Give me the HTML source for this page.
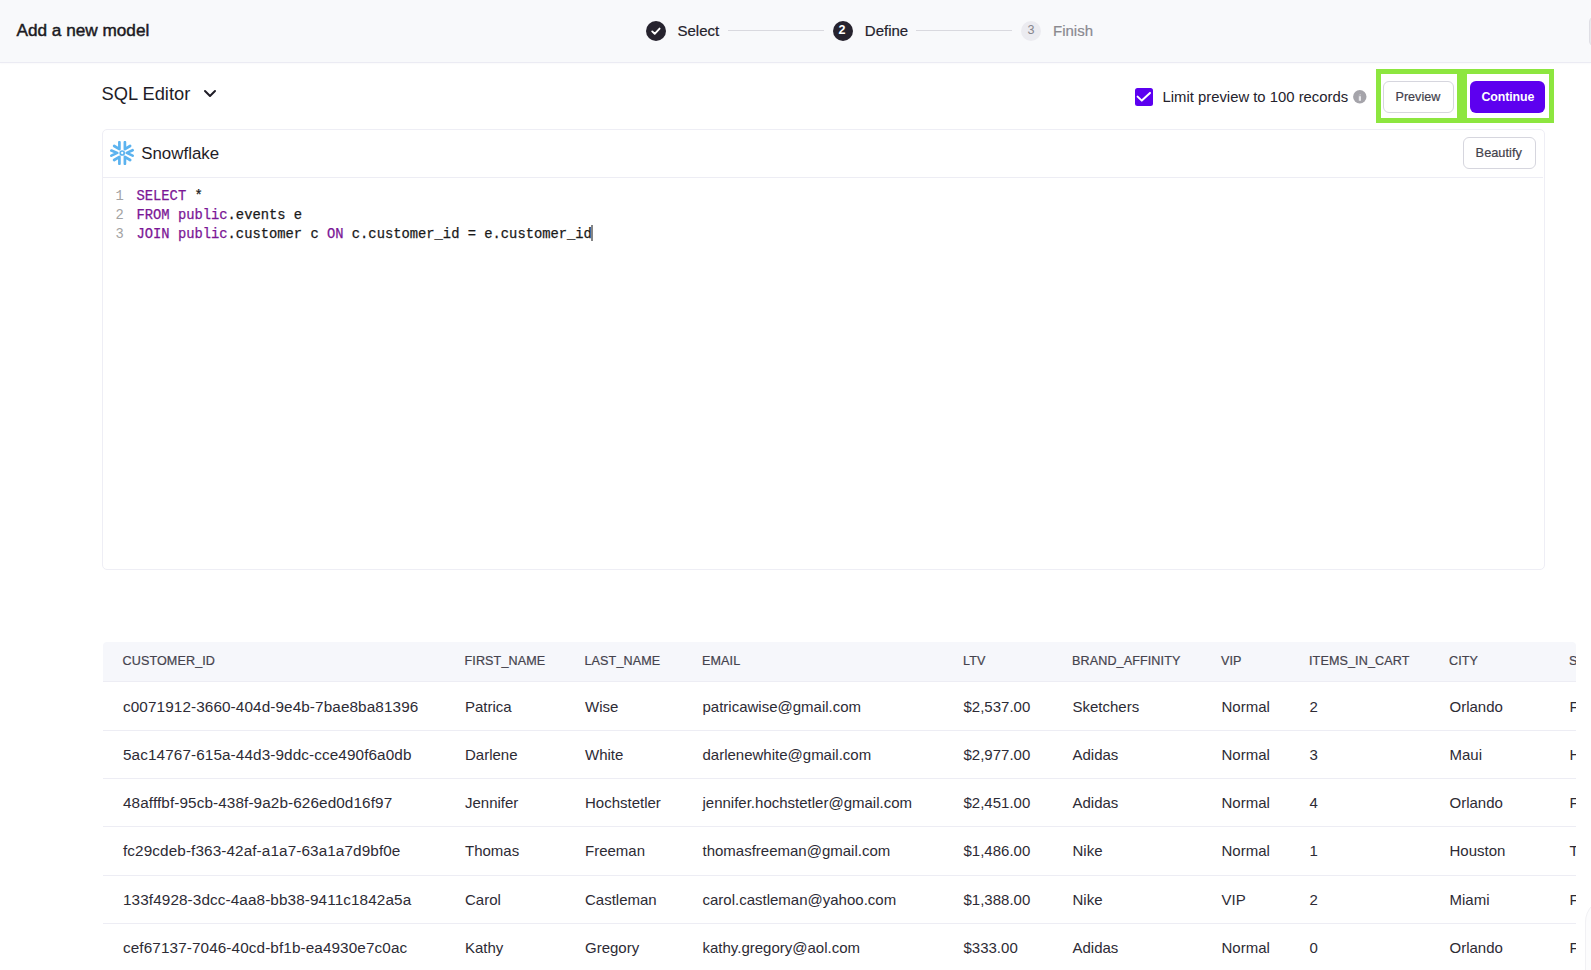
<!DOCTYPE html>
<html><head><meta charset="utf-8"><title>Add a new model</title>
<style>
html,body{margin:0;padding:0;}
body{width:1591px;height:970px;overflow:hidden;position:relative;background:#fff;font-family:'Liberation Sans', sans-serif;}
.t{position:absolute;white-space:nowrap;}
</style></head><body>
<div style="position:absolute;left:0;top:0;width:1591px;height:62px;background:#f8f9fb;border-bottom:1px solid #ebebf3;box-shadow:0 1px 1.5px rgba(30,30,80,0.025)"></div>
<div class="t" style="left:16.5px;top:15px;font-size:17.2px;line-height:30px;color:#1b1a22;font-weight:normal;letter-spacing:0px;font-family:'Liberation Sans', sans-serif;-webkit-text-stroke:0.45px currentColor;">Add a new model</div>
<div style="position:absolute;left:1589px;top:16px;width:30px;height:29px;border:1px solid #dfdfe5;border-radius:6px;background:#eaeaee"></div>
<div style="position:absolute;left:646px;top:21px;width:20px;height:20px;border-radius:50%;background:#26232e"><svg width="20" height="20" viewBox="0 0 20 20" style="position:absolute;left:0;top:0"><path d="M6.2 10.4 L8.7 12.8 L13.6 7.6" fill="none" stroke="#fff" stroke-width="1.9" stroke-linecap="round" stroke-linejoin="round"/></svg></div>
<div class="t" style="left:677.5px;top:16px;font-size:15.0px;line-height:30px;color:#24222c;font-weight:normal;letter-spacing:0px;font-family:'Liberation Sans', sans-serif;-webkit-text-stroke:0.2px currentColor;">Select</div>
<div style="position:absolute;left:728px;top:30px;width:96px;height:1px;background:#d9d9df"></div>
<div style="position:absolute;left:833px;top:21px;width:20px;height:20px;border-radius:50%;background:#26232e"></div>
<div class="t" style="left:838.6px;top:15px;font-size:12.6px;line-height:30px;color:#ffffff;font-weight:bold;letter-spacing:0px;font-family:'Liberation Sans', sans-serif;">2</div>
<div class="t" style="left:864.8px;top:16px;font-size:15.0px;line-height:30px;color:#24222c;font-weight:normal;letter-spacing:0px;font-family:'Liberation Sans', sans-serif;-webkit-text-stroke:0.2px currentColor;">Define</div>
<div style="position:absolute;left:916px;top:30px;width:96px;height:1px;background:#d9d9df"></div>
<div style="position:absolute;left:1021px;top:21px;width:20px;height:20px;border-radius:50%;background:#ebebf0"></div>
<div class="t" style="left:1027.6px;top:15px;font-size:12.6px;line-height:30px;color:#86858c;font-weight:normal;letter-spacing:0px;font-family:'Liberation Sans', sans-serif;">3</div>
<div class="t" style="left:1053px;top:16px;font-size:15.0px;line-height:30px;color:#8a8990;font-weight:normal;letter-spacing:0px;font-family:'Liberation Sans', sans-serif;-webkit-text-stroke:0.2px currentColor;">Finish</div>
<div class="t" style="left:101.5px;top:79px;font-size:18.3px;line-height:30px;color:#1f1d27;font-weight:normal;letter-spacing:0px;font-family:'Liberation Sans', sans-serif;">SQL Editor</div>
<svg style="position:absolute;left:202px;top:86.8px" width="16" height="14" viewBox="0 0 16 14"><path d="M3 4 L8 9 L13 4" fill="none" stroke="#1f1d27" stroke-width="2" stroke-linecap="round" stroke-linejoin="round"/></svg>
<div style="position:absolute;left:1134.5px;top:88px;width:18px;height:18px;border-radius:2.5px;background:#5c00f0"></div>
<svg style="position:absolute;left:1134.5px;top:88px" width="18" height="18" viewBox="0 0 18 18"><path d="M2.6 8.6 L6.8 12.6 L15 4.9" fill="none" stroke="#fff" stroke-width="2" stroke-linecap="round" stroke-linejoin="round"/></svg>
<div class="t" style="left:1162.5px;top:82px;font-size:14.85px;line-height:30px;color:#24222c;font-weight:normal;letter-spacing:0px;font-family:'Liberation Sans', sans-serif;">Limit preview to 100 records</div>
<svg style="position:absolute;left:1352.5px;top:90px" width="14" height="14" viewBox="0 0 14 14"><circle cx="6.8" cy="6.8" r="6.7" fill="#a5a4aa"/><rect x="5.8" y="6.2" width="2.2" height="4.6" fill="#e6e6ea"/><path d="M5.2 5.2 L7.6 4.2 L8 5.2 Z" fill="#d8d8dc"/></svg>
<div style="position:absolute;left:1376px;top:69px;width:76px;height:44px;border:5px solid #8de63f"></div>
<div style="position:absolute;left:1462px;top:69px;width:82px;height:44px;border:5px solid #8de63f"></div>
<div style="position:absolute;left:1383px;top:81px;width:69px;height:30px;border:1px solid #d6d6de;border-radius:6px;background:#fff"></div>
<div class="t" style="left:1395.5px;top:82px;font-size:12.6px;line-height:30px;color:#44424c;font-weight:normal;letter-spacing:0px;font-family:'Liberation Sans', sans-serif;-webkit-text-stroke:0.2px currentColor;">Preview</div>
<div style="position:absolute;left:1470px;top:81px;width:75px;height:32px;border-radius:6px;background:#5d00ef"></div>
<div class="t" style="left:1481.5px;top:82px;font-size:12.4px;line-height:30px;color:#ffffff;font-weight:bold;letter-spacing:-0.12px;font-family:'Liberation Sans', sans-serif;">Continue</div>
<div style="position:absolute;left:102px;top:129px;width:1441px;height:439px;border:1px solid #eeeef5;border-radius:5px;background:#fff"></div>
<div style="position:absolute;left:103px;top:177px;width:1440px;height:1px;background:#ededf4"></div>
<svg style="position:absolute;left:110px;top:141px" width="24" height="24" viewBox="0 0 24 24">
<g fill="none" stroke="#5cb3ef" stroke-width="2.7" stroke-linecap="round" stroke-linejoin="round">
<path d="M9.4 1.2 V8.2 L4.2 5"/>
<path d="M14.9 1.2 V8.2 L20.1 5"/>
<path d="M1.4 9.6 L7.2 11.9 L1.4 14.6"/>
<path d="M22.6 9.2 L16.8 11.9 L22.6 14.6"/>
<path d="M9.4 22.8 V15.8 L4.2 19"/>
<path d="M14.9 22.8 V15.8 L20.1 19"/>
</g>
<circle cx="12.2" cy="12" r="2.0" fill="none" stroke="#5cb3ef" stroke-width="1.7"/>
</svg>
<div class="t" style="left:141.2px;top:139px;font-size:16.9px;line-height:30px;color:#1f1d27;font-weight:normal;letter-spacing:0px;font-family:'Liberation Sans', sans-serif;">Snowflake</div>
<div style="position:absolute;left:1463px;top:137px;width:71px;height:30px;border:1px solid #d6d6de;border-radius:6px;background:#fff"></div>
<div class="t" style="left:1475.6px;top:138px;font-size:12.8px;line-height:30px;color:#44424c;font-weight:normal;letter-spacing:0px;font-family:'Liberation Sans', sans-serif;-webkit-text-stroke:0.2px currentColor;">Beautify</div>
<div class="t" style="left:115.5px;top:182px;font-size:13.8px;line-height:30px;color:#a3a3a3;font-weight:normal;letter-spacing:0px;font-family:'Liberation Mono', monospace;">1</div>
<div class="t" style="left:136.5px;top:182px;font-size:13.8px;line-height:30px;color:#1a1a1a;font-weight:normal;letter-spacing:0px;font-family:'Liberation Mono', monospace;white-space:pre;-webkit-text-stroke:0.25px currentColor;"><span style="color:#7b1796">SELECT</span><span style="color:#1a1a1a">&nbsp;*</span></div>
<div class="t" style="left:115.5px;top:201px;font-size:13.8px;line-height:30px;color:#a3a3a3;font-weight:normal;letter-spacing:0px;font-family:'Liberation Mono', monospace;">2</div>
<div class="t" style="left:136.5px;top:201px;font-size:13.8px;line-height:30px;color:#1a1a1a;font-weight:normal;letter-spacing:0px;font-family:'Liberation Mono', monospace;white-space:pre;-webkit-text-stroke:0.25px currentColor;"><span style="color:#7b1796">FROM</span><span style="color:#1a1a1a">&nbsp;</span><span style="color:#7b1796">public</span><span style="color:#1a1a1a">.events&nbsp;e</span></div>
<div class="t" style="left:115.5px;top:220px;font-size:13.8px;line-height:30px;color:#a3a3a3;font-weight:normal;letter-spacing:0px;font-family:'Liberation Mono', monospace;">3</div>
<div class="t" style="left:136.5px;top:220px;font-size:13.8px;line-height:30px;color:#1a1a1a;font-weight:normal;letter-spacing:0px;font-family:'Liberation Mono', monospace;white-space:pre;-webkit-text-stroke:0.25px currentColor;"><span style="color:#7b1796">JOIN</span><span style="color:#1a1a1a">&nbsp;</span><span style="color:#7b1796">public</span><span style="color:#1a1a1a">.customer&nbsp;c&nbsp;</span><span style="color:#7b1796">ON</span><span style="color:#1a1a1a">&nbsp;c.customer_id&nbsp;=&nbsp;e.customer_id</span></div>
<div style="position:absolute;left:591px;top:225px;width:2px;height:15.5px;background:#858585"></div>
<div style="position:absolute;left:103px;top:642px;width:1473px;height:39px;background:#f6f7fb;border-radius:4px 4px 0 0"></div>
<div style="position:absolute;left:103px;top:642px;width:1473px;height:328px;overflow:hidden"><div class="t" style="left:19.5px;top:4px;font-size:12.6px;line-height:30px;color:#45434d;font-weight:normal;letter-spacing:0.1px;font-family:'Liberation Sans', sans-serif;-webkit-text-stroke:0.2px currentColor;">CUSTOMER_ID</div><div class="t" style="left:361.5px;top:4px;font-size:12.6px;line-height:30px;color:#45434d;font-weight:normal;letter-spacing:0.1px;font-family:'Liberation Sans', sans-serif;-webkit-text-stroke:0.2px currentColor;">FIRST_NAME</div><div class="t" style="left:481.5px;top:4px;font-size:12.6px;line-height:30px;color:#45434d;font-weight:normal;letter-spacing:0.1px;font-family:'Liberation Sans', sans-serif;-webkit-text-stroke:0.2px currentColor;">LAST_NAME</div><div class="t" style="left:599.0px;top:4px;font-size:12.6px;line-height:30px;color:#45434d;font-weight:normal;letter-spacing:0.1px;font-family:'Liberation Sans', sans-serif;-webkit-text-stroke:0.2px currentColor;">EMAIL</div><div class="t" style="left:860.0px;top:4px;font-size:12.6px;line-height:30px;color:#45434d;font-weight:normal;letter-spacing:0.1px;font-family:'Liberation Sans', sans-serif;-webkit-text-stroke:0.2px currentColor;">LTV</div><div class="t" style="left:969.0px;top:4px;font-size:12.6px;line-height:30px;color:#45434d;font-weight:normal;letter-spacing:0.1px;font-family:'Liberation Sans', sans-serif;-webkit-text-stroke:0.2px currentColor;">BRAND_AFFINITY</div><div class="t" style="left:1118.0px;top:4px;font-size:12.6px;line-height:30px;color:#45434d;font-weight:normal;letter-spacing:0.1px;font-family:'Liberation Sans', sans-serif;-webkit-text-stroke:0.2px currentColor;">VIP</div><div class="t" style="left:1206.0px;top:4px;font-size:12.6px;line-height:30px;color:#45434d;font-weight:normal;letter-spacing:0.1px;font-family:'Liberation Sans', sans-serif;-webkit-text-stroke:0.2px currentColor;">ITEMS_IN_CART</div><div class="t" style="left:1346.0px;top:4px;font-size:12.6px;line-height:30px;color:#45434d;font-weight:normal;letter-spacing:0.1px;font-family:'Liberation Sans', sans-serif;-webkit-text-stroke:0.2px currentColor;">CITY</div><div class="t" style="left:1466.0px;top:4px;font-size:12.6px;line-height:30px;color:#45434d;font-weight:normal;letter-spacing:0.1px;font-family:'Liberation Sans', sans-serif;-webkit-text-stroke:0.2px currentColor;">STATE</div><div style="position:absolute;left:0;top:39px;width:1473px;height:1px;background:#ededf4"></div><div style="position:absolute;left:0;top:88px;width:1473px;height:1px;background:#ededf4"></div><div style="position:absolute;left:0;top:136px;width:1473px;height:1px;background:#ededf4"></div><div style="position:absolute;left:0;top:184px;width:1473px;height:1px;background:#ededf4"></div><div style="position:absolute;left:0;top:233px;width:1473px;height:1px;background:#ededf4"></div><div style="position:absolute;left:0;top:281px;width:1473px;height:1px;background:#ededf4"></div><div class="t" style="left:20px;top:50px;font-size:15.3px;line-height:30px;color:#2d2b35;font-weight:normal;letter-spacing:0.1px;font-family:'Liberation Sans', sans-serif;">c0071912-3660-404d-9e4b-7bae8ba81396</div><div class="t" style="left:362px;top:50px;font-size:15.0px;line-height:30px;color:#2d2b35;font-weight:normal;letter-spacing:0px;font-family:'Liberation Sans', sans-serif;">Patrica</div><div class="t" style="left:482px;top:50px;font-size:15.0px;line-height:30px;color:#2d2b35;font-weight:normal;letter-spacing:0px;font-family:'Liberation Sans', sans-serif;">Wise</div><div class="t" style="left:599.5px;top:50px;font-size:15.0px;line-height:30px;color:#2d2b35;font-weight:normal;letter-spacing:0px;font-family:'Liberation Sans', sans-serif;">patricawise@gmail.com</div><div class="t" style="left:860.5px;top:50px;font-size:15.0px;line-height:30px;color:#2d2b35;font-weight:normal;letter-spacing:0px;font-family:'Liberation Sans', sans-serif;">$2,537.00</div><div class="t" style="left:969.5px;top:50px;font-size:15.0px;line-height:30px;color:#2d2b35;font-weight:normal;letter-spacing:0px;font-family:'Liberation Sans', sans-serif;">Sketchers</div><div class="t" style="left:1118.5px;top:50px;font-size:15.0px;line-height:30px;color:#2d2b35;font-weight:normal;letter-spacing:0px;font-family:'Liberation Sans', sans-serif;">Normal</div><div class="t" style="left:1206.5px;top:50px;font-size:15.0px;line-height:30px;color:#2d2b35;font-weight:normal;letter-spacing:0px;font-family:'Liberation Sans', sans-serif;">2</div><div class="t" style="left:1346.5px;top:50px;font-size:15.0px;line-height:30px;color:#2d2b35;font-weight:normal;letter-spacing:0px;font-family:'Liberation Sans', sans-serif;">Orlando</div><div class="t" style="left:1466.5px;top:50px;font-size:15.0px;line-height:30px;color:#2d2b35;font-weight:normal;letter-spacing:0px;font-family:'Liberation Sans', sans-serif;">FL</div><div class="t" style="left:20px;top:98px;font-size:15.3px;line-height:30px;color:#2d2b35;font-weight:normal;letter-spacing:0.1px;font-family:'Liberation Sans', sans-serif;">5ac14767-615a-44d3-9ddc-cce490f6a0db</div><div class="t" style="left:362px;top:98px;font-size:15.0px;line-height:30px;color:#2d2b35;font-weight:normal;letter-spacing:0px;font-family:'Liberation Sans', sans-serif;">Darlene</div><div class="t" style="left:482px;top:98px;font-size:15.0px;line-height:30px;color:#2d2b35;font-weight:normal;letter-spacing:0px;font-family:'Liberation Sans', sans-serif;">White</div><div class="t" style="left:599.5px;top:98px;font-size:15.0px;line-height:30px;color:#2d2b35;font-weight:normal;letter-spacing:0px;font-family:'Liberation Sans', sans-serif;">darlenewhite@gmail.com</div><div class="t" style="left:860.5px;top:98px;font-size:15.0px;line-height:30px;color:#2d2b35;font-weight:normal;letter-spacing:0px;font-family:'Liberation Sans', sans-serif;">$2,977.00</div><div class="t" style="left:969.5px;top:98px;font-size:15.0px;line-height:30px;color:#2d2b35;font-weight:normal;letter-spacing:0px;font-family:'Liberation Sans', sans-serif;">Adidas</div><div class="t" style="left:1118.5px;top:98px;font-size:15.0px;line-height:30px;color:#2d2b35;font-weight:normal;letter-spacing:0px;font-family:'Liberation Sans', sans-serif;">Normal</div><div class="t" style="left:1206.5px;top:98px;font-size:15.0px;line-height:30px;color:#2d2b35;font-weight:normal;letter-spacing:0px;font-family:'Liberation Sans', sans-serif;">3</div><div class="t" style="left:1346.5px;top:98px;font-size:15.0px;line-height:30px;color:#2d2b35;font-weight:normal;letter-spacing:0px;font-family:'Liberation Sans', sans-serif;">Maui</div><div class="t" style="left:1466.5px;top:98px;font-size:15.0px;line-height:30px;color:#2d2b35;font-weight:normal;letter-spacing:0px;font-family:'Liberation Sans', sans-serif;">HI</div><div class="t" style="left:20px;top:146px;font-size:15.3px;line-height:30px;color:#2d2b35;font-weight:normal;letter-spacing:0.1px;font-family:'Liberation Sans', sans-serif;">48afffbf-95cb-438f-9a2b-626ed0d16f97</div><div class="t" style="left:362px;top:146px;font-size:15.0px;line-height:30px;color:#2d2b35;font-weight:normal;letter-spacing:0px;font-family:'Liberation Sans', sans-serif;">Jennifer</div><div class="t" style="left:482px;top:146px;font-size:15.0px;line-height:30px;color:#2d2b35;font-weight:normal;letter-spacing:0px;font-family:'Liberation Sans', sans-serif;">Hochstetler</div><div class="t" style="left:599.5px;top:146px;font-size:15.0px;line-height:30px;color:#2d2b35;font-weight:normal;letter-spacing:0px;font-family:'Liberation Sans', sans-serif;">jennifer.hochstetler@gmail.com</div><div class="t" style="left:860.5px;top:146px;font-size:15.0px;line-height:30px;color:#2d2b35;font-weight:normal;letter-spacing:0px;font-family:'Liberation Sans', sans-serif;">$2,451.00</div><div class="t" style="left:969.5px;top:146px;font-size:15.0px;line-height:30px;color:#2d2b35;font-weight:normal;letter-spacing:0px;font-family:'Liberation Sans', sans-serif;">Adidas</div><div class="t" style="left:1118.5px;top:146px;font-size:15.0px;line-height:30px;color:#2d2b35;font-weight:normal;letter-spacing:0px;font-family:'Liberation Sans', sans-serif;">Normal</div><div class="t" style="left:1206.5px;top:146px;font-size:15.0px;line-height:30px;color:#2d2b35;font-weight:normal;letter-spacing:0px;font-family:'Liberation Sans', sans-serif;">4</div><div class="t" style="left:1346.5px;top:146px;font-size:15.0px;line-height:30px;color:#2d2b35;font-weight:normal;letter-spacing:0px;font-family:'Liberation Sans', sans-serif;">Orlando</div><div class="t" style="left:1466.5px;top:146px;font-size:15.0px;line-height:30px;color:#2d2b35;font-weight:normal;letter-spacing:0px;font-family:'Liberation Sans', sans-serif;">FL</div><div class="t" style="left:20px;top:194px;font-size:15.3px;line-height:30px;color:#2d2b35;font-weight:normal;letter-spacing:0.1px;font-family:'Liberation Sans', sans-serif;">fc29cdeb-f363-42af-a1a7-63a1a7d9bf0e</div><div class="t" style="left:362px;top:194px;font-size:15.0px;line-height:30px;color:#2d2b35;font-weight:normal;letter-spacing:0px;font-family:'Liberation Sans', sans-serif;">Thomas</div><div class="t" style="left:482px;top:194px;font-size:15.0px;line-height:30px;color:#2d2b35;font-weight:normal;letter-spacing:0px;font-family:'Liberation Sans', sans-serif;">Freeman</div><div class="t" style="left:599.5px;top:194px;font-size:15.0px;line-height:30px;color:#2d2b35;font-weight:normal;letter-spacing:0px;font-family:'Liberation Sans', sans-serif;">thomasfreeman@gmail.com</div><div class="t" style="left:860.5px;top:194px;font-size:15.0px;line-height:30px;color:#2d2b35;font-weight:normal;letter-spacing:0px;font-family:'Liberation Sans', sans-serif;">$1,486.00</div><div class="t" style="left:969.5px;top:194px;font-size:15.0px;line-height:30px;color:#2d2b35;font-weight:normal;letter-spacing:0px;font-family:'Liberation Sans', sans-serif;">Nike</div><div class="t" style="left:1118.5px;top:194px;font-size:15.0px;line-height:30px;color:#2d2b35;font-weight:normal;letter-spacing:0px;font-family:'Liberation Sans', sans-serif;">Normal</div><div class="t" style="left:1206.5px;top:194px;font-size:15.0px;line-height:30px;color:#2d2b35;font-weight:normal;letter-spacing:0px;font-family:'Liberation Sans', sans-serif;">1</div><div class="t" style="left:1346.5px;top:194px;font-size:15.0px;line-height:30px;color:#2d2b35;font-weight:normal;letter-spacing:0px;font-family:'Liberation Sans', sans-serif;">Houston</div><div class="t" style="left:1466.5px;top:194px;font-size:15.0px;line-height:30px;color:#2d2b35;font-weight:normal;letter-spacing:0px;font-family:'Liberation Sans', sans-serif;">TX</div><div class="t" style="left:20px;top:243px;font-size:15.3px;line-height:30px;color:#2d2b35;font-weight:normal;letter-spacing:0.1px;font-family:'Liberation Sans', sans-serif;">133f4928-3dcc-4aa8-bb38-9411c1842a5a</div><div class="t" style="left:362px;top:243px;font-size:15.0px;line-height:30px;color:#2d2b35;font-weight:normal;letter-spacing:0px;font-family:'Liberation Sans', sans-serif;">Carol</div><div class="t" style="left:482px;top:243px;font-size:15.0px;line-height:30px;color:#2d2b35;font-weight:normal;letter-spacing:0px;font-family:'Liberation Sans', sans-serif;">Castleman</div><div class="t" style="left:599.5px;top:243px;font-size:15.0px;line-height:30px;color:#2d2b35;font-weight:normal;letter-spacing:0px;font-family:'Liberation Sans', sans-serif;">carol.castleman@yahoo.com</div><div class="t" style="left:860.5px;top:243px;font-size:15.0px;line-height:30px;color:#2d2b35;font-weight:normal;letter-spacing:0px;font-family:'Liberation Sans', sans-serif;">$1,388.00</div><div class="t" style="left:969.5px;top:243px;font-size:15.0px;line-height:30px;color:#2d2b35;font-weight:normal;letter-spacing:0px;font-family:'Liberation Sans', sans-serif;">Nike</div><div class="t" style="left:1118.5px;top:243px;font-size:15.0px;line-height:30px;color:#2d2b35;font-weight:normal;letter-spacing:0px;font-family:'Liberation Sans', sans-serif;">VIP</div><div class="t" style="left:1206.5px;top:243px;font-size:15.0px;line-height:30px;color:#2d2b35;font-weight:normal;letter-spacing:0px;font-family:'Liberation Sans', sans-serif;">2</div><div class="t" style="left:1346.5px;top:243px;font-size:15.0px;line-height:30px;color:#2d2b35;font-weight:normal;letter-spacing:0px;font-family:'Liberation Sans', sans-serif;">Miami</div><div class="t" style="left:1466.5px;top:243px;font-size:15.0px;line-height:30px;color:#2d2b35;font-weight:normal;letter-spacing:0px;font-family:'Liberation Sans', sans-serif;">FL</div><div class="t" style="left:20px;top:291px;font-size:15.3px;line-height:30px;color:#2d2b35;font-weight:normal;letter-spacing:0.1px;font-family:'Liberation Sans', sans-serif;">cef67137-7046-40cd-bf1b-ea4930e7c0ac</div><div class="t" style="left:362px;top:291px;font-size:15.0px;line-height:30px;color:#2d2b35;font-weight:normal;letter-spacing:0px;font-family:'Liberation Sans', sans-serif;">Kathy</div><div class="t" style="left:482px;top:291px;font-size:15.0px;line-height:30px;color:#2d2b35;font-weight:normal;letter-spacing:0px;font-family:'Liberation Sans', sans-serif;">Gregory</div><div class="t" style="left:599.5px;top:291px;font-size:15.0px;line-height:30px;color:#2d2b35;font-weight:normal;letter-spacing:0px;font-family:'Liberation Sans', sans-serif;">kathy.gregory@aol.com</div><div class="t" style="left:860.5px;top:291px;font-size:15.0px;line-height:30px;color:#2d2b35;font-weight:normal;letter-spacing:0px;font-family:'Liberation Sans', sans-serif;">$333.00</div><div class="t" style="left:969.5px;top:291px;font-size:15.0px;line-height:30px;color:#2d2b35;font-weight:normal;letter-spacing:0px;font-family:'Liberation Sans', sans-serif;">Adidas</div><div class="t" style="left:1118.5px;top:291px;font-size:15.0px;line-height:30px;color:#2d2b35;font-weight:normal;letter-spacing:0px;font-family:'Liberation Sans', sans-serif;">Normal</div><div class="t" style="left:1206.5px;top:291px;font-size:15.0px;line-height:30px;color:#2d2b35;font-weight:normal;letter-spacing:0px;font-family:'Liberation Sans', sans-serif;">0</div><div class="t" style="left:1346.5px;top:291px;font-size:15.0px;line-height:30px;color:#2d2b35;font-weight:normal;letter-spacing:0px;font-family:'Liberation Sans', sans-serif;">Orlando</div><div class="t" style="left:1466.5px;top:291px;font-size:15.0px;line-height:30px;color:#2d2b35;font-weight:normal;letter-spacing:0px;font-family:'Liberation Sans', sans-serif;">FL</div></div>
<div style="position:absolute;left:1585px;top:898px;width:60px;height:120px;border-radius:24px;border:1px solid #f1f1f4;background:#fcfcfd"></div>
</body></html>
